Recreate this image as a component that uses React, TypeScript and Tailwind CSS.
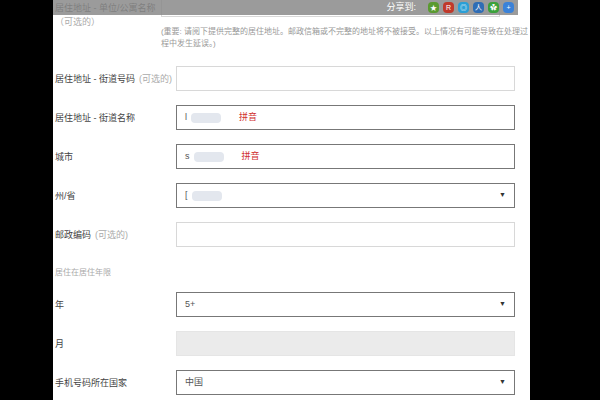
const font = { fontFamily: '"Liberation Sans", "Noto Sans CJK SC", sans-serif' };

function Field({ label, opt, children }: { label: string; opt?: string; children: React.ReactNode }) {
  return (
    <div className="flex h-[39px] items-start">
      <div className="w-[121px] pt-[6px] text-[9px] leading-[14px] text-[#444]">
        {label}
        {opt && <span className="ml-1 text-[#aaa]">{opt}</span>}
      </div>
      {children}
    </div>
  );
}

function Input({ value, blur, red, select, disabled, dark }: { value?: string; blur?: boolean; red?: string; select?: boolean; disabled?: boolean; dark?: boolean }) {
  return (
    <div
      className={`flex h-[25px] w-[339px] items-center px-2 text-[9px] ${
        disabled ? "bg-[#ebebeb] border border-[#e5e5e5]" : dark ? "bg-white border border-[#777]" : "bg-white border border-[#d8d8d8]"
      }`}>
      {value && <span className="text-[#555]">{value}</span>}
      {blur && <span className="ml-1 h-[10px] w-[30px] rounded bg-[#e3e7ee]" />}
      {red && <span className="ml-[18px] text-[#d03030]">{red}</span>}
      {select && <span className="ml-auto text-[7px] text-[#333]">▼</span>}
    </div>
  );
}

const icons = ["#5a9a30", "#c0392b", "#2a9fd6", "#2f6db5", "#3aa13a", "#3b82d8"];
const glyphs = ["★", "R", "◎", "人", "✿", "+"];

export default function App() {
  return (
    <div className="flex h-[400px] w-[600px] overflow-hidden bg-black" style={font}>
      <div className="relative ml-[53px] h-[400px] w-[477px] bg-white">
        <div className="absolute left-0 top-0 z-10 flex h-[15px] w-[465px] items-center justify-end gap-[4px] bg-[#8a8a8a]/85 pr-1">
          <span className="mr-2 text-[9px] text-white">分享到:</span>
          {icons.map((c, i) => (
            <span key={c} className="flex h-[11px] w-[11px] items-center justify-center rounded-sm text-[7px] leading-none text-white" style={{ background: c }}>
              {glyphs[i]}
            </span>
          ))}
        </div>
        <div className="mt-[-9px] pl-[2px]">
          <div className="flex">
            <div className="w-[121px] pt-[10px] text-[9px] leading-[14px] text-[#444]">
              <div className="whitespace-nowrap">居住地址 - 单位/公寓名称</div>
              <div className="text-[#aaa]">（可选的）</div>
            </div>
            <div>
              <div className="h-[26px] w-[339px] border border-[#d8d8d8]" />
              <div className="mt-[9px] text-[8px] leading-[12px] text-[#999]">
                (重要: 请阅下提供完整的居住地址。邮政信箱或不完整的地址将不被接受。以上情况有可能导致在处理过程中发生延误。)
              </div>
            </div>
          </div>
          <div className="mt-[16px]">
            <Field label="居住地址 - 街道号码" opt="(可选的)"><Input /></Field>
            <Field label="居住地址 - 街道名称"><Input value="l" blur red="拼音" dark /></Field>
            <Field label="城市"><Input value="s" blur red="拼音" dark /></Field>
            <Field label="州/省"><Input value="[" blur select dark /></Field>
            <Field label="邮政编码" opt="(可选的)"><Input /></Field>
          </div>
          <div className="mt-[6px] h-[25px] text-[8px] text-[#aaa]">居住在居住年限</div>
          <Field label="年"><Input value="5+" select dark /></Field>
          <Field label="月"><Input disabled /></Field>
          <Field label="手机号码所在国家"><Input value="中国" select dark /></Field>
        </div>
      </div>
    </div>
  );
}
